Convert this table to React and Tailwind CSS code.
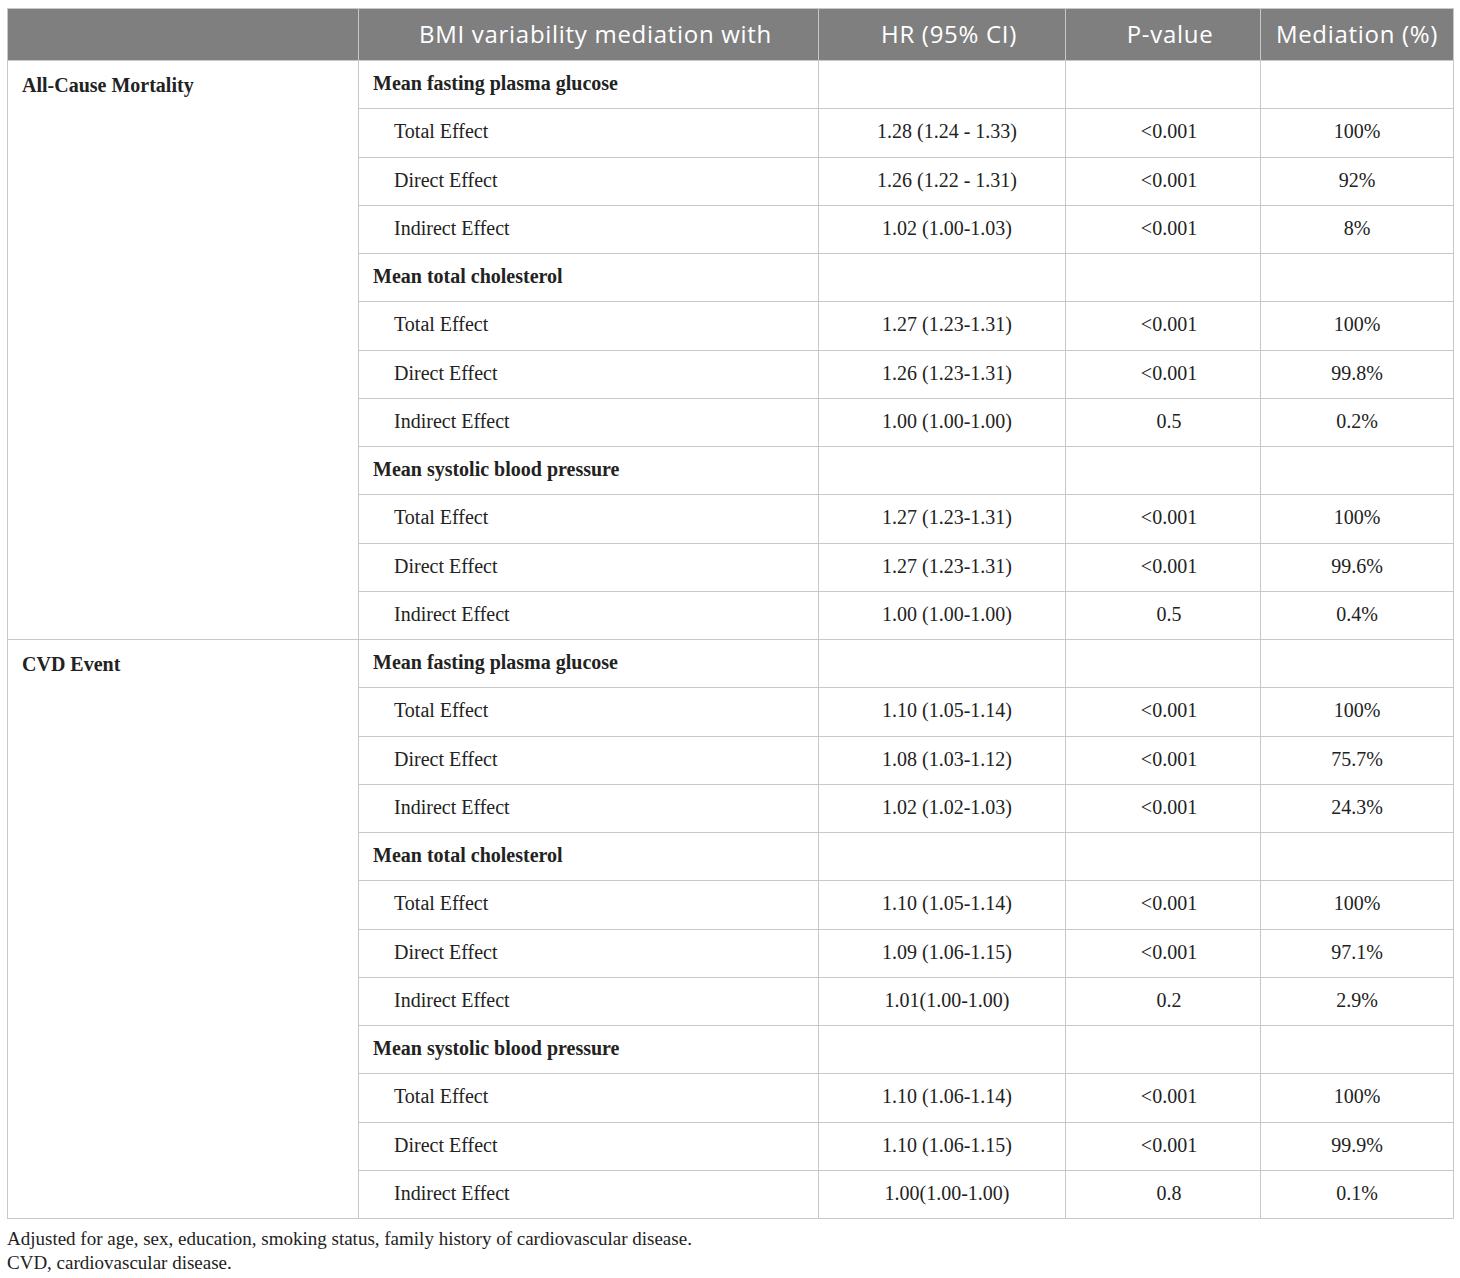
import React from 'react'

const groups = [
  {
    outcome: 'All-Cause Mortality',
    blocks: [
      {
        name: 'Mean fasting plasma glucose',
        rows: [
          ['Total Effect', '1.28 (1.24 - 1.33)', '<0.001', '100%'],
          ['Direct Effect', '1.26 (1.22 - 1.31)', '<0.001', '92%'],
          ['Indirect Effect', '1.02 (1.00-1.03)', '<0.001', '8%'],
        ],
      },
      {
        name: 'Mean total cholesterol',
        rows: [
          ['Total Effect', '1.27 (1.23-1.31)', '<0.001', '100%'],
          ['Direct Effect', '1.26 (1.23-1.31)', '<0.001', '99.8%'],
          ['Indirect Effect', '1.00 (1.00-1.00)', '0.5', '0.2%'],
        ],
      },
      {
        name: 'Mean systolic blood pressure',
        rows: [
          ['Total Effect', '1.27 (1.23-1.31)', '<0.001', '100%'],
          ['Direct Effect', '1.27 (1.23-1.31)', '<0.001', '99.6%'],
          ['Indirect Effect', '1.00 (1.00-1.00)', '0.5', '0.4%'],
        ],
      },
    ],
  },
  {
    outcome: 'CVD Event',
    blocks: [
      {
        name: 'Mean fasting plasma glucose',
        rows: [
          ['Total Effect', '1.10 (1.05-1.14)', '<0.001', '100%'],
          ['Direct Effect', '1.08 (1.03-1.12)', '<0.001', '75.7%'],
          ['Indirect Effect', '1.02 (1.02-1.03)', '<0.001', '24.3%'],
        ],
      },
      {
        name: 'Mean total cholesterol',
        rows: [
          ['Total Effect', '1.10 (1.05-1.14)', '<0.001', '100%'],
          ['Direct Effect', '1.09 (1.06-1.15)', '<0.001', '97.1%'],
          ['Indirect Effect', '1.01(1.00-1.00)', '0.2', '2.9%'],
        ],
      },
      {
        name: 'Mean systolic blood pressure',
        rows: [
          ['Total Effect', '1.10 (1.06-1.14)', '<0.001', '100%'],
          ['Direct Effect', '1.10 (1.06-1.15)', '<0.001', '99.9%'],
          ['Indirect Effect', '1.00(1.00-1.00)', '0.8', '0.1%'],
        ],
      },
    ],
  },
]

const cell = 'border border-[#c8c8c8] h-[48.25px] align-middle pt-0 pb-[3px] pr-0'
const head = 'border border-[#c8c8c8] h-[52px] font-normal text-center pb-[2px]'

export default function App() {
  return (
    <div className="bg-white min-h-[1278px] w-[1460px] pt-[8px] pl-[7px]" style={{ fontFamily: '"Liberation Serif", serif' }}>
      <table className="border-collapse table-fixed w-[1446px] text-[20px] text-[#222]">
        <colgroup>
          <col className="w-[351px]" />
          <col className="w-[460px]" />
          <col className="w-[247px]" />
          <col className="w-[195px]" />
          <col className="w-[193px]" />
        </colgroup>
        <thead>
          <tr className="bg-[#7f7f7f] text-white text-[24px] tracking-[0.7px]" style={{ fontFamily: '"Open Sans", sans-serif' }}>
            <th className={head}></th>
            <th className={`${head} pl-[14px]`}>BMI variability mediation with</th>
            <th className={`${head} pl-[14px]`}>HR (95% CI)</th>
            <th className={`${head} pl-[14px]`}>P-value</th>
            <th className={head}>Mediation (%)</th>
          </tr>
        </thead>
        <tbody>
          {groups.map(g =>
            g.blocks.map((b, bi) => (
              <React.Fragment key={g.outcome + bi}>
                <tr>
                  {bi === 0 && (
                    <td rowSpan={12} className="border border-[#c8c8c8] align-top font-bold pl-[14px] pt-[9px]">
                      {g.outcome}
                    </td>
                  )}
                  <td className={`${cell} font-bold pl-[14px]`}>{b.name}</td>
                  <td className={cell}></td>
                  <td className={cell}></td>
                  <td className={cell}></td>
                </tr>
                {b.rows.map(r => (
                  <tr key={r[0]}>
                    <td className={`${cell} pl-[35px]`}>{r[0]}</td>
                    <td className={`${cell} text-center pl-[10px]`}>{r[1]}</td>
                    <td className={`${cell} text-center pl-[12px]`}>{r[2]}</td>
                    <td className={`${cell} text-center pl-0`}>{r[3]}</td>
                  </tr>
                ))}
              </React.Fragment>
            ))
          )}
        </tbody>
      </table>
      <div className="text-[19px] leading-[24px] text-[#222] pt-[8px]">
        <p>Adjusted for age, sex, education, smoking status, family history of cardiovascular disease.</p>
        <p>CVD, cardiovascular disease.</p>
      </div>
    </div>
  )
}
